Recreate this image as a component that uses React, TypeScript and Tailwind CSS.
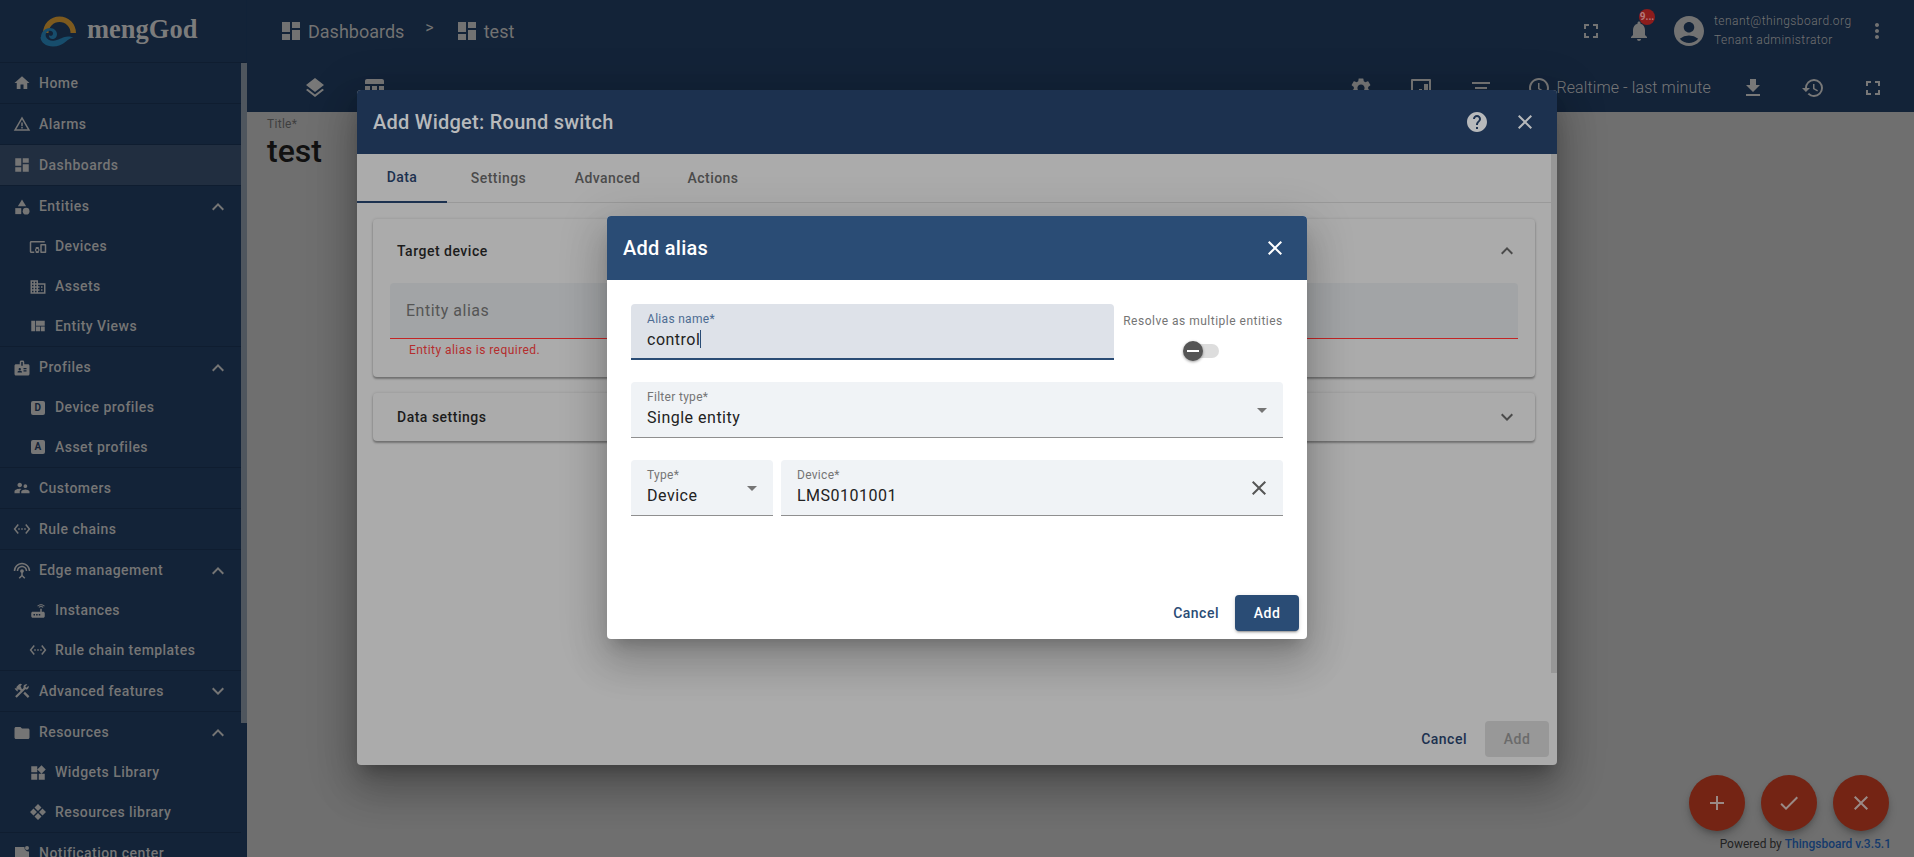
import React from "react";
import {
  MdHome, MdWarningAmber, MdDashboard, MdCategory, MdDevicesOther, MdDomain, MdViewQuilt, MdBadge,
  MdSupervisorAccount, MdSettingsEthernet, MdSettingsInputAntenna, MdRouter, MdConstruction, MdFolder, MdWidgets,
  MdExpandLess, MdExpandMore, MdFullscreen, MdNotifications, MdAccountCircle, MdMoreVert, MdLayers, MdTableChart,
  MdSettings, MdFilterList, MdSchedule, MdFileDownload, MdHistory, MdHelp, MdClose, MdAdd, MdCheck,
} from "react-icons/md";

const Letter = ({ c }: { c: string }) => (
  <span className="w-[14px] h-[14px] rounded-[2px] bg-[#767676] text-[#132338] text-[10px] font-bold leading-[14px] text-center block">{c}</span>
);
const Diamonds = () => (
  <svg width="18" height="18" viewBox="0 0 18 18" fill="currentColor">
    <path d="M9 1l3.500 3.500L9 8 5.500 4.500zM4.500 5.500L8 9l-3.500 3.500L1 9zM13.500 5.500L17 9l-3.500 3.500L10 9zM9 10l3.500 3.500L9 17l-3.500-3.500z" />
  </svg>
);
const Notif = () => (
  <svg width="18" height="18" viewBox="0 0 18 18" fill="currentColor">
    <path d="M2 2h9.500a4 4 0 0 0 4.500 4.500V16H2z" /><circle cx="14" cy="3" r="2" />
  </svg>
);
const Widgetish = () => (
  <svg width="24" height="24" viewBox="0 0 24 24" fill="currentColor">
    <path d="M21 3H3a1 1 0 0 0-1 1v16a1 1 0 0 0 1 1h18a1 1 0 0 0 1-1V4a1 1 0 0 0-1-1zM20 19H4V5h16z" />
    <path d="M15 8h4v10h-4zM10 13h3v5h-3z" />
  </svg>
);

type Row = { label: string; icon: React.ReactNode; sub?: boolean; end?: boolean; open?: boolean; closed?: boolean; active?: boolean };
const I = (C: React.ComponentType<{ size?: number }>) => <C size={18} />;
const rows: Row[] = [
  { label: "Home", icon: I(MdHome), end: true },
  { label: "Alarms", icon: I(MdWarningAmber), end: true },
  { label: "Dashboards", icon: I(MdDashboard), end: true, active: true },
  { label: "Entities", icon: I(MdCategory), open: true },
  { label: "Devices", icon: I(MdDevicesOther), sub: true },
  { label: "Assets", icon: I(MdDomain), sub: true },
  { label: "Entity Views", icon: I(MdViewQuilt), sub: true, end: true },
  { label: "Profiles", icon: I(MdBadge), open: true },
  { label: "Device profiles", icon: <Letter c="D" />, sub: true },
  { label: "Asset profiles", icon: <Letter c="A" />, sub: true, end: true },
  { label: "Customers", icon: I(MdSupervisorAccount), end: true },
  { label: "Rule chains", icon: I(MdSettingsEthernet), end: true },
  { label: "Edge management", icon: I(MdSettingsInputAntenna), open: true },
  { label: "Instances", icon: I(MdRouter), sub: true },
  { label: "Rule chain templates", icon: I(MdSettingsEthernet), sub: true, end: true },
  { label: "Advanced features", icon: I(MdConstruction), closed: true, end: true },
  { label: "Resources", icon: I(MdFolder), open: true },
  { label: "Widgets Library", icon: I(MdWidgets), sub: true },
  { label: "Resources library", icon: <Diamonds />, sub: true, end: true },
  { label: "Notification center", icon: <Notif /> },
];

const Logo = () => (
  <svg width="40" height="36" viewBox="0 0 40 36">
    <path d="M3 20a16.500 16.500 0 1 1 33 0h-5.500a11 11 0 0 0-22 0z" fill="#7d5a1e" />
    <path d="M1 24c0-5 4-9 9-9 4 0 7 3 7 6s-2 5-4.500 5-4-2-3.500-4c1 1.500 4 1 4-1.500 0-2-2-3-4-2.500-3 .5-4 3.500-3 6 1.500 3 5 4.500 9 3.500 5-1 8-4 13-4 2 0 4 .5 5.500 1-3 .5-5 2-7.500 4-4 3.500-8 5-13 5-7 0-12.500-4-12.500-9.500z" fill="#174d6c" />
  </svg>
);

const Field = ({ label, value, w, end, focus }: { label: string; value: React.ReactNode; w: string; end?: React.ReactNode; focus?: boolean }) => (
  <div className={`${w} h-[56px] rounded-t-[4px] px-4 pt-2 relative ${focus ? "bg-[#dee2e9] border-b-2 border-[#2a4c75]" : "bg-[#f0f3f6] border-b border-[#8f8f8f]"}`}>
    <div className={`text-[12px] leading-[14px] tracking-[0.3px] ${focus ? "text-[#4d6c92]" : "text-[#757575]"}`}>{label}</div>
    <div className="text-[16px] leading-6 tracking-[0.5px] text-[#222222] mt-[2px]">{value}</div>
    {end}
  </div>
);
const Arrow = ({ cls }: { cls: string }) => (
  <svg className={`absolute ${cls}`} width="10" height="5" viewBox="0 0 10 5" fill="#757575"><path d="M0 0h10L5 5z" /></svg>
);

export default function App() {
  return (
    <div className="relative w-[1914px] h-[857px] overflow-hidden flex bg-[#132338] font-['Roboto',sans-serif]">
      <aside className="w-[247px] shrink-0 flex flex-col border-r border-[#10203a]/40">
        <div className="h-[63px] shrink-0 flex items-center pl-[40px] gap-[7px] border-b border-[#0f1d30]">
          <Logo />
          <span className="font-['Liberation_Serif',serif] font-bold text-[26.500px] leading-none text-[#7c7c7c] -mt-1">mengGod</span>
        </div>
        <div className="flex flex-1 min-h-0">
          <nav className="w-[241px] shrink-0 text-[#757575] text-[14px] font-medium tracking-[0.45px]">
            {rows.map((r) => (
              <div
                key={r.label}
                className={`flex items-center ${r.sub ? "h-[40px] pl-[29px] pb-[1px]" : "h-[41px] pl-[13px]"} pr-[11px] ${r.end ? "border-b border-[#0f1d30]" : ""} ${r.active ? "bg-[#212e40]" : ""}`}
              >
                <span className="w-[18px] flex justify-center shrink-0">{r.icon}</span>
                <span className="ml-2 flex-1 whitespace-nowrap">{r.label}</span>
                {r.open && <MdExpandLess size={24} />}
                {r.closed && <MdExpandMore size={24} />}
              </div>
            ))}
          </nav>
          <div className="w-[6px] shrink-0">
            <div className="h-[660px] bg-[#4f565e]" />
          </div>
        </div>
      </aside>

      <main className="flex-1 flex flex-col min-w-0 bg-[#6f6f6f]">
        <header className="h-[64px] shrink-0 bg-[#132338] flex items-center text-[#727272] pl-[32px] pr-[25px] pb-[2px]">
          <MdDashboard size={24} />
          <span className="ml-[5px] text-[18px]">Dashboards</span>
          <span className="ml-[21px] -mt-[7px] text-[16px]">&gt;</span>
          <span className="ml-[21px]"><MdDashboard size={24} /></span>
          <span className="ml-[5px] text-[18px]">test</span>
          <div className="flex-1" />
          <MdFullscreen size={24} />
          <div className="relative ml-[24px] -mr-[1px]">
            <MdNotifications size={24} />
            <span className="absolute -top-[10px] left-[12px] w-[16px] h-[16px] rounded-full bg-[#8c1c1c] text-[#b47a7a] text-[10px] font-bold leading-[16px] text-center">9...</span>
          </div>
          <span className="ml-[21px]"><MdAccountCircle size={36} /></span>
          <div className="ml-[7px] text-[12px] leading-[19px] font-light tracking-[0.45px] w-[151px]">
            <div>tenant@thingsboard.org</div>
            <div>Tenant administrator</div>
          </div>
          <MdMoreVert size={24} />
        </header>
        <div className="h-[48px] shrink-0 bg-[#132338] flex items-center text-[#787878] pl-[56px] pr-[29px]">
          <MdLayers size={24} />
          <span className="ml-[35px]"><MdTableChart size={24} /></span>
          <div className="flex-1" />
          <MdSettings size={24} />
          <span className="ml-[36px]"><Widgetish /></span>
          <span className="ml-[36px]"><MdFilterList size={24} /></span>
          <span className="ml-[34px]"><MdSchedule size={24} /></span>
          <span className="ml-[5px] text-[16px] font-light tracking-[0.1px]">Realtime - last minute</span>
          <span className="ml-[30px]"><MdFileDownload size={24} /></span>
          <span className="ml-[36px]"><MdHistory size={24} /></span>
          <span className="ml-[36px]"><MdFullscreen size={24} /></span>
        </div>
        <div className="pl-[20px] pt-[5px]">
          <div className="text-[12px] leading-[14px] text-[#3f3f3f] tracking-[0.3px]">Title*</div>
          <div className="text-[32px] leading-[38px] font-medium text-[#111111] mt-[1px]">test</div>
        </div>
      </main>

      {/* Add Widget dialog */}
      <div className="absolute left-[357px] top-[90px] w-[1200px] h-[675px] rounded-[4px] overflow-hidden bg-[#ababab] flex flex-col shadow-[0_11px_15px_-7px_rgba(0,0,0,.25),0_24px_38px_3px_rgba(0,0,0,.18),0_9px_46px_8px_rgba(0,0,0,.16)]">
        <div className="h-[64px] shrink-0 bg-[#1c314f] flex items-center pl-4 pr-[20px] text-[#b7b9bb]">
          <span className="text-[20px] font-medium tracking-[0.25px] flex-1">Add Widget: Round switch</span>
          <MdHelp size={24} />
          <span className="ml-[24px]"><MdClose size={24} /></span>
        </div>
        <div className="h-[49px] shrink-0 flex border-b border-[#999999] text-[14px] font-medium tracking-[0.45px] text-[#4b4b4b]">
          <div className="w-[90px] flex items-center justify-center text-[#1c314f] border-b-2 border-[#1c314f] h-[49px]">Data</div>
          <div className="w-[103px] flex items-center justify-center">Settings</div>
          <div className="w-[115px] flex items-center justify-center">Advanced</div>
          <div className="w-[96px] flex items-center justify-center">Actions</div>
        </div>
        <div className="flex-1 pl-4 pr-[22px] pt-[16px] text-[#1c1c1c]">
          <div className="h-[158px] rounded-[4px] bg-[#ababab] shadow-[0_2px_2px_rgba(0,0,0,.3),0_0_3px_rgba(0,0,0,.15)] px-[17px]">
            <div className="h-[64px] flex items-center pl-[7px] -mr-[1px] text-[14px] font-medium tracking-[0.5px]">
              <span className="flex-1">Target device</span>
              <span className="text-[#4a4a4a]"><MdExpandLess size={24} /></span>
            </div>
            <div className="h-[56px] bg-[#a2a4a6] border-b border-[#c22525] rounded-t-[4px] flex items-center px-4 text-[16px] tracking-[0.5px] text-[#555555]">Entity alias</div>
            <div className="pl-[19px] pt-[4px] text-[12px] leading-[14px] tracking-[0.45px] text-[#b52d2d]">Entity alias is required.</div>
          </div>
          <div className="h-[48px] mt-[16px] rounded-[4px] bg-[#ababab] shadow-[0_2px_2px_rgba(0,0,0,.3),0_0_3px_rgba(0,0,0,.15)] flex items-center pl-[24px] pr-[16px] text-[14px] font-medium tracking-[0.5px]">
            <span className="flex-1">Data settings</span>
            <span className="text-[#4a4a4a]"><MdExpandMore size={24} /></span>
          </div>
        </div>
        <div className="flex justify-end items-center gap-2 pr-2 pb-2 text-[14px] font-medium tracking-[0.5px]">
          <span className="px-[10px] text-[#1c314f]">Cancel</span>
          <span className="w-[64px] h-[36px] rounded-[4px] bg-[#989898] text-[#6b6b6b] flex items-center justify-center">Add</span>
        </div>
        <div className="absolute right-0 top-[64px] w-[6px] h-[519px] bg-[#979797]" />
      </div>

      {/* Add alias dialog */}
      <div className="absolute left-[607px] top-[216px] w-[700px] h-[423px] rounded-[4px] overflow-hidden bg-white flex flex-col shadow-[0_11px_15px_-7px_rgba(0,0,0,.2),0_24px_38px_3px_rgba(0,0,0,.14),0_9px_46px_8px_rgba(0,0,0,.12)]">
        <div className="h-[64px] shrink-0 bg-[#2a4c75] flex items-center pl-4 pr-[20px] text-white">
          <span className="text-[20px] font-medium tracking-[0.25px] flex-1">Add alias</span>
          <MdClose size={24} />
        </div>
        <div className="flex-1 px-6 pt-[24px]">
          <div className="flex gap-[9px]">
            <Field
              w="w-[483px]"
              focus
              label="Alias name*"
              value={<span>control<span className="inline-block w-px h-[18px] bg-[#2a4c75] align-[-3px]" /></span>}
            />
            <div className="flex-1 flex flex-col items-center pt-[10px]">
              <span className="text-[12px] leading-[14px] tracking-[0.5px] text-[#757575] whitespace-nowrap">Resolve as multiple entities</span>
              <div className="relative w-[26px] h-[14px] rounded-full bg-[#dddddd] mt-[16px] ml-[6px]">
                <span className="absolute -left-[10px] -top-[3px] w-[20px] h-[20px] rounded-full bg-[#555555] shadow-[0_1px_3px_rgba(0,0,0,.4)] flex items-center justify-center">
                  <span className="w-[12px] h-[2px] bg-white" />
                </span>
              </div>
            </div>
          </div>
          <div className="mt-[22px]">
            <Field w="w-full" label="Filter type*" value="Single entity" end={<Arrow cls="right-[16px] top-[26px]" />} />
          </div>
          <div className="flex gap-2 mt-[22px]">
            <Field w="w-[142px]" label="Type*" value="Device" end={<Arrow cls="right-[16px] top-[26px]" />} />
            <Field
              w="flex-1"
              label="Device*"
              value="LMS0101001"
              end={<span className="absolute right-[12px] top-[16px] text-[#555555]"><MdClose size={24} /></span>}
            />
          </div>
        </div>
        <div className="flex justify-end items-center gap-2 pr-2 pb-2 text-[14px] font-medium tracking-[0.5px]">
          <span className="px-2 text-[#2a4c75]">Cancel</span>
          <span className="w-[64px] h-[36px] rounded-[4px] bg-[#2a4c75] text-white flex items-center justify-center shadow-[0_3px_1px_-2px_rgba(0,0,0,.2),0_2px_2px_rgba(0,0,0,.14),0_1px_5px_rgba(0,0,0,.12)]">Add</span>
        </div>
      </div>

      {/* Floating actions */}
      <div className="absolute right-[25px] top-[775px] flex gap-4 text-[#9a8a86]">
        {[MdAdd, MdCheck, MdClose].map((C, i) => (
          <span key={i} className="w-[56px] h-[56px] rounded-full bg-[#742414] flex items-center justify-center shadow-[0_3px_5px_-1px_rgba(0,0,0,.2),0_6px_10px_rgba(0,0,0,.14)]">
            <C size={24} />
          </span>
        ))}
      </div>
      <div className="absolute right-[23px] top-[837px] text-[12px] leading-[14px] text-[#222222]">
        Powered by <span className="text-[#143a6c] font-medium">Thingsboard v.3.5.1</span>
      </div>
    </div>
  );
}
